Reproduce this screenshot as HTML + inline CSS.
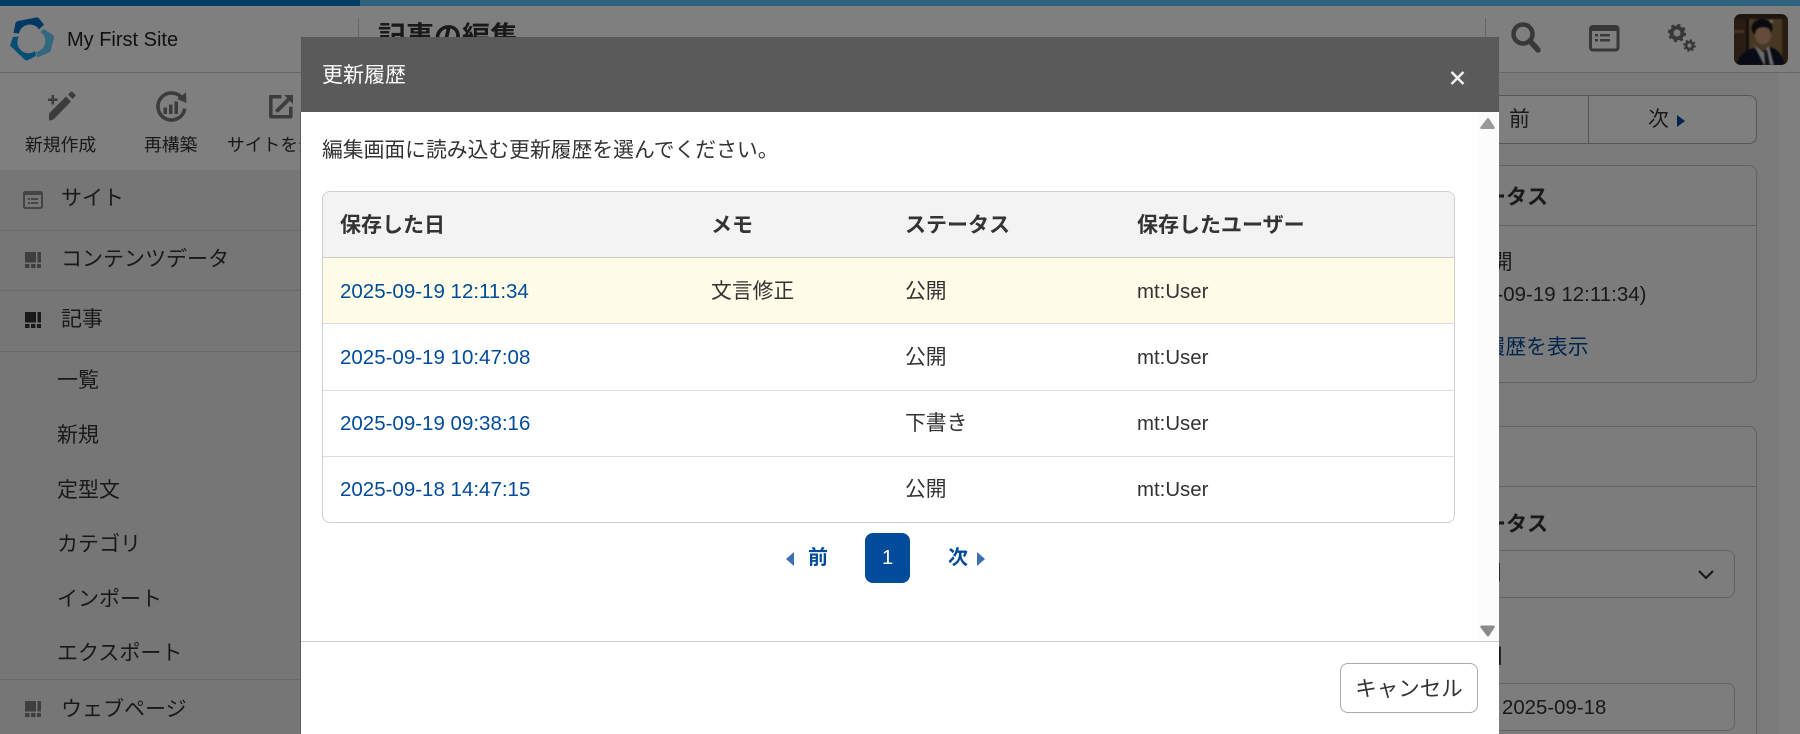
<!DOCTYPE html>
<html lang="ja"><head><meta charset="utf-8"><title>記事の編集</title>
<style>
html,body{margin:0;padding:0;width:1800px;height:734px;overflow:hidden;background:#fff}
body{position:relative;font-family:"Liberation Sans","Noto Sans CJK JP",sans-serif;color:#333;font-size:20.8px}
.t{position:absolute;white-space:nowrap;line-height:30px;height:30px}
.b{font-weight:700;font-size:21px}
.l{font-size:20.4px}
.d{font-size:20.5px}
.n{font-size:21px}
.a{position:absolute;box-sizing:border-box}
svg{position:absolute;left:0;top:0;overflow:visible}
.link{color:#004b9a}
#ov{position:absolute;left:0;top:0;width:1800px;height:734px;background:rgba(0,0,0,.5)}
#m{position:absolute;left:301px;top:37px;width:1198px;height:697px;background:#fff}
</style></head><body>
<!-- page behind -->
<div class="a" style="left:0;top:0;width:1800px;height:6px;background:#5bc6ff"></div>
<div class="a" style="left:0;top:0;width:360px;height:6px;background:#007acc"></div>
<div class="a" style="left:360px;top:73px;width:1418px;height:661px;background:#f4f4f4"></div>
<div class="a" style="left:0;top:73px;width:360px;height:661px;background:#ececec"></div>
<div class="a" style="left:0;top:73px;width:360px;height:97px;background:#fff"></div>
<div class="a" style="left:0;top:72px;width:1800px;height:1px;background:#ccc"></div>
<div class="a" style="left:0;top:230px;width:360px;height:1px;background:#d4d4d4"></div>
<div class="a" style="left:0;top:290px;width:360px;height:1px;background:#d4d4d4"></div>
<div class="a" style="left:0;top:351px;width:360px;height:1px;background:#d4d4d4"></div>
<div class="a" style="left:0;top:679px;width:360px;height:1px;background:#d4d4d4"></div>
<div class="a" style="left:358px;top:18px;width:1px;height:54px;background:#ccc"></div>
<div class="a" style="left:1485px;top:18px;width:1px;height:54px;background:#ccc"></div>

<div class="t" style="left:67px;top:25px;font-size:20px;color:#222">My First Site</div>
<div class="t b" style="left:378px;top:17px;font-size:28px;line-height:40px;height:40px">記事の編集</div>
<svg width="1800" height="734">
 <path d="M13.500 33L15.500 23Q16 21.500 18 21L36 17.500Q38 17 39 18.500L44 24.500L39 29.500A11 11 0 0 0 19 33.500Z" fill="#0072c8"/>
 <path d="M13 37L19 36.500A11 11 0 0 0 35 51L36 55.500Q35.500 56.500 27 60.500Q26 60.500 25 60L10.500 46Q10 45 10.500 44Z" fill="#0a9ee8"/>
 <path d="M43.500 29L53 35Q54 36 54 38L50.500 51Q50 52 49 52.500L37.500 57.500L36 52A11 11 0 0 0 40.500 32Z" fill="#5ed0ff"/>
 <!-- toolbar -->
 <g fill="#787878" stroke="none">
  <path d="M51.500 95h2.500v3.500h3.500v2.500H54v3.500h-2.500V101H48v-2.500h3.500z"/>
  <path d="M49 120.500v-7L66 96.500l5 5L54.500 118.500Q52 120.500 49 120.500Z"/>
  <path d="M68 94.500l2.500-2.500q1-1 2 0l2.500 2.500q1 1 0 2l-2.500 2.500z"/>
  <rect x="163.500" y="107.500" width="3.500" height="6.500"/><rect x="169" y="104.500" width="3.500" height="9.500"/><rect x="174.500" y="101.500" width="3.500" height="12.500"/>
 </g>
 <path d="M183 99.500A13.500 13.500 0 1 0 184.800 108.500" fill="none" stroke="#787878" stroke-width="3.600"/>
 <path d="M177 99L186 92.500L186.500 103Z" fill="#787878"/>
 <path d="M281.500 96.800h-10.700v19.500q0 .5.500.5h19q.5 0 .5-.5v-9.500" fill="none" stroke="#787878" stroke-width="3.500"/>
 <path d="M277.500 110.500l11-11" stroke="#787878" stroke-width="4" fill="none" stroke-linecap="round"/>
 <path d="M284 95h9v9z" fill="#787878"/>
 <!-- nav icons -->
 <rect x="24" y="192" width="18" height="16" rx="1.500" fill="none" stroke="#8a8a8a" stroke-width="2"/>
 <rect x="24" y="192" width="18" height="3" fill="#8a8a8a"/>
 <path d="M28 198h2v2h-2zM31 198h7v2h-7zM28 202h2v2h-2zM31 202h7v2h-7z" fill="#8a8a8a"/>
 <g fill="#7f7f7f"><path d="M25 252h11v10.500H25zM37.500 252H41v10.500h-3.500zM25 264h4.500v4H25zM31 264h4.500v4H31zM37 264h4v4h-4z"/></g>
 <g fill="#333"><path d="M25 312h11v10.500H25zM37.500 312H41v10.500h-3.500zM25 324h4.500v4H25zM31 324h4.500v4H31zM37 324h4v4h-4z"/></g>
 <g fill="#7f7f7f"><path d="M25 701h11v10.500H25zM37.500 701H41v10.500h-3.500zM25 713h4.500v4H25zM31 713h4.500v4H31zM37 713h4v4h-4z"/></g>
 <!-- top right icons -->
 <circle cx="1523" cy="34" r="9.500" fill="none" stroke="#707070" stroke-width="4.500"/>
 <path d="M1530 41L1538 50" stroke="#707070" stroke-width="5.500" stroke-linecap="round"/>
 <rect x="1590.500" y="26.500" width="27.500" height="23.500" rx="2.500" fill="none" stroke="#707070" stroke-width="3"/>
 <rect x="1590" y="26" width="29" height="5" fill="#707070"/>
 <path d="M1595 34h3v2.500h-3zM1600 34h10v2.500h-10zM1595 39h3v2.500h-3zM1600 39h10v2.500h-10z" fill="#707070"/>
 <circle cx="1677" cy="33" r="5.500" fill="none" stroke="#707070" stroke-width="4"/>
 <circle cx="1677" cy="33" r="8" fill="none" stroke="#707070" stroke-width="2.500" stroke-dasharray="3 3.300"/>
 <circle cx="1689.500" cy="45.500" r="3.500" fill="none" stroke="#707070" stroke-width="2.800"/>
 <circle cx="1689.500" cy="45.500" r="5.300" fill="none" stroke="#707070" stroke-width="2" stroke-dasharray="2 2.200"/>
</svg>
<div class="a" style="left:1734px;top:14px;width:54px;height:51px;border-radius:7px;overflow:hidden;background:#5a4028">
 <svg width="54" height="51" style="filter:blur(.7px)">
  <rect width="54" height="51" fill="#523a26"/>
  <rect x="0" y="0" width="54" height="5" fill="#3a2c20"/>
  <rect x="14" y="5" width="34" height="38" fill="#8f7048"/>
  <rect x="12" y="5" width="3" height="40" fill="#2a2018"/>
  <rect x="0" y="16" width="10" height="3" fill="#8a6a48"/>
  <rect x="35" y="6" width="4" height="3" fill="#e0d0b0"/>
  <ellipse cx="28" cy="14" rx="10.500" ry="9" fill="#14141a"/>
  <ellipse cx="29" cy="21" rx="8" ry="9.500" fill="#c89878"/>
  <path d="M20 18q0-8 9-8t9 7q-4-4-9-4t-9 5z" fill="#14141a"/>
  <path d="M3 51q2-13 16-17l9 3 9-4q11 4 14 18z" fill="#10172a"/>
  <path d="M20 31l9 7 6-6 5 19H30z" fill="#d4d6da"/>
  <path d="M30 36l3 0 3 15h-5z" fill="#222a36"/>
 </svg>
</div>

<div class="t" style="left:25px;top:130px;font-size:17.800px">新規作成</div>
<div class="t" style="left:144px;top:130px;font-size:17.800px">再構築</div>
<div class="t" style="left:227px;top:130px;font-size:17.800px">サイトを公開</div>
<div class="t n" style="left:61px;top:184px">サイト</div>
<div class="t n" style="left:61px;top:245px">コンテンツデータ</div>
<div class="t n" style="left:61px;top:305px">記事</div>
<div class="t n" style="left:57px;top:366px">一覧</div>
<div class="t n" style="left:57px;top:421px">新規</div>
<div class="t n" style="left:57px;top:476px">定型文</div>
<div class="t n" style="left:57px;top:530px">カテゴリ</div>
<div class="t n" style="left:57px;top:585px">インポート</div>
<div class="t n" style="left:57px;top:639px">エクスポート</div>
<div class="t n" style="left:61px;top:695px">ウェブページ</div>

<!-- right panel -->
<div class="a" style="left:1420px;top:95px;width:337px;height:49px;border:1px solid #aaa;border-radius:8px;background:#fff"></div>
<div class="a" style="left:1588px;top:95px;width:1px;height:49px;background:#aaa"></div>
<div class="t" style="left:1509px;top:105px">前</div>
<div class="t" style="left:1648px;top:105px">次</div>
<div class="a" style="left:1420px;top:165px;width:337px;height:218px;border:1px solid #c4c4c4;border-radius:8px;background:#f8f8f8"></div>
<div class="a" style="left:1420px;top:225px;width:337px;height:1px;background:#c4c4c4"></div>
<div class="t b" style="left:1443px;top:183px">ステータス</div>
<div class="t" style="left:1471px;top:248px">公開</div>
<div class="t d" style="left:1444px;top:280px">(2025-09-19 12:11:34)</div>
<div class="t link" style="left:1443px;top:333px">更新履歴を表示</div>
<div class="a" style="left:1420px;top:426px;width:337px;height:320px;border:1px solid #c4c4c4;border-radius:8px;background:#f8f8f8"></div>
<div class="a" style="left:1420px;top:486px;width:337px;height:1px;background:#c4c4c4"></div>
<div class="t b" style="left:1443px;top:510px">ステータス</div>
<div class="a" style="left:1440px;top:550px;width:295px;height:48px;border:1px solid #c4c4c4;border-radius:8px;background:#fafafa"></div>
<div class="t" style="left:1460px;top:559px">公開</div>
<div class="t b" style="left:1441px;top:642px">公開日</div>
<div class="a" style="left:1440px;top:683px;width:295px;height:48px;border:1px solid #c4c4c4;border-radius:8px;background:#fafafa"></div>
<div class="t l" style="left:1502px;top:693px">2025-09-18</div>
<svg width="1800" height="734"><path d="M1677 115l8 6-8 6z" fill="#004b9a"/><path d="M1699 571l7 7 7-7" fill="none" stroke="#333" stroke-width="2.200"/></svg>

<div id="ov"></div>
<div class="a" style="left:0;top:0;width:360px;height:6px;background:#003d66"></div>

<!-- modal -->
<div id="m"></div>
<div class="a" style="left:300px;top:112px;width:1px;height:622px;background:#5c5c5c"></div>
<div class="a" style="left:301px;top:37px;width:1198px;height:75px;background:#5a5a5a"></div>
<div class="t n" style="left:322px;top:61px;color:#fff">更新履歴</div>
<div class="a" style="left:1477px;top:112px;width:22px;height:529px;background:#fcfcfc"></div>
<svg width="1800" height="734" style="z-index:2">
 <path d="M1451.500 72l12 12M1463.500 72l-12 12" stroke="#f0f0f0" stroke-width="2.500"/>
 <path d="M1487 118.500Q1488 117.500 1489 118.500L1494.500 127Q1495.500 129 1493 129H1482Q1479.500 129 1480.500 127Z" fill="#999"/>
 <path d="M1487 636Q1488 637 1489 636L1494.500 627.500Q1495.500 625.500 1493 625.500H1482Q1479.500 625.500 1480.500 627.500Z" fill="#8a8a8a"/>
 <path d="M794 552v14l-8-7z" fill="#3d6fb5"/>
 <path d="M977 552v14l8-7z" fill="#3d6fb5"/>
</svg>
<div class="t" style="left:322px;top:136px">編集画面に読み込む更新履歴を選んでください。</div>

<div class="a" style="left:322px;top:191px;width:1133px;height:332px;border:1px solid #d0d0d0;border-radius:8px;overflow:hidden;background:#fff">
 <div class="a" style="left:0;top:0;width:1131px;height:66px;background:#f3f3f3;border-bottom:1px solid #ccc"></div>
 <div class="a" style="left:0;top:66px;width:1131px;height:66px;background:#fffde8;border-bottom:1px solid #ddd"></div>
 <div class="a" style="left:0;top:132px;width:1131px;height:67px;border-bottom:1px solid #ddd"></div>
 <div class="a" style="left:0;top:199px;width:1131px;height:66px;border-bottom:1px solid #ddd"></div>
</div>
<div class="t b" style="left:340px;top:211px">保存した日</div>
<div class="t b" style="left:711px;top:211px">メモ</div>
<div class="t b" style="left:905px;top:211px">ステータス</div>
<div class="t b" style="left:1137px;top:211px">保存したユーザー</div>

<div class="t link d" style="left:340px;top:277px">2025-09-19 12:11:34</div>
<div class="t" style="left:711px;top:277px">文言修正</div>
<div class="t" style="left:905px;top:277px">公開</div>
<div class="t l" style="left:1137px;top:277px">mt:User</div>

<div class="t link d" style="left:340px;top:343px">2025-09-19 10:47:08</div>
<div class="t" style="left:905px;top:343px">公開</div>
<div class="t l" style="left:1137px;top:343px">mt:User</div>

<div class="t link d" style="left:340px;top:409px">2025-09-19 09:38:16</div>
<div class="t" style="left:905px;top:409px">下書き</div>
<div class="t l" style="left:1137px;top:409px">mt:User</div>

<div class="t link d" style="left:340px;top:475px">2025-09-18 14:47:15</div>
<div class="t" style="left:905px;top:475px">公開</div>
<div class="t l" style="left:1137px;top:475px">mt:User</div>

<div class="t b link" style="left:808px;top:543px;font-size:20px">前</div>
<div class="a" style="left:865px;top:533px;width:45px;height:50px;background:#004b9a;border-radius:8px;color:#fff;text-align:center;line-height:51px;font-size:20px">1</div>
<div class="t b link" style="left:948px;top:543px;font-size:20px">次</div>

<div class="a" style="left:301px;top:641px;width:1198px;height:1px;background:#ccc"></div>
<div class="a" style="left:1340px;top:663px;width:138px;height:50px;border:1px solid #aaa;border-radius:8px;text-align:center;line-height:50px;background:#fff;font-size:21.500px">キャンセル</div>
</body></html>
